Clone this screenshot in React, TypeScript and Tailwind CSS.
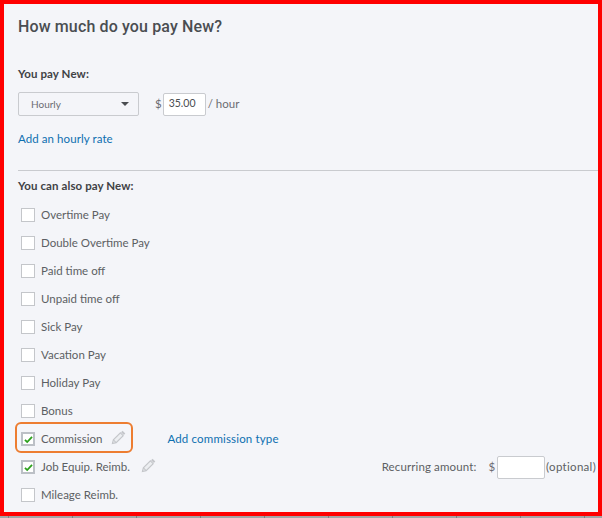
const pays = [
  { label: "Overtime Pay" },
  { label: "Double Overtime Pay" },
  { label: "Paid time off" },
  { label: "Unpaid time off" },
  { label: "Sick Pay" },
  { label: "Vacation Pay" },
  { label: "Holiday Pay" },
  { label: "Bonus" },
];

const ticks = Array.from({ length: 10 }, (_, i) => i);

function Pencil({ className }: { className?: string }) {
  return (
    <svg viewBox="0 0 16 16" className={className} fill="none" stroke="#c4c6ca" strokeWidth="1.2">
      <path d="M1.5 14.5l1-4L10 3l3 3-7.500 7.500-4 1z" fill="#eceef1" />
      <path d="M2.500 10.500l3 3" />
      <path d="M11.500 1.500l3 3" strokeWidth="2.200" />
    </svg>
  );
}

function CheckBox({ checked }: { checked?: boolean }) {
  if (checked) {
    return (
      <div className="w-[14px] h-[14px] shrink-0 bg-white border-2 border-[#bcc0c6] flex items-center justify-center">
        <svg viewBox="0 0 14 14" className="w-[9px] h-[9px]" fill="none" stroke="#2ca01c" strokeWidth="2.800">
          <path d="M1.500 7.500l3.500 3.500L12.500 3" />
        </svg>
      </div>
    );
  }
  return <div className="w-[14px] h-[14px] shrink-0 bg-white border border-[#c4c6ca]" />;
}

function Row({ label, checked }: { label: string; checked?: boolean }) {
  return (
    <div className="h-[28px] flex items-center gap-[6px] pl-[3px]">
      <CheckBox checked={checked} />
      <span className="text-[11.5px] text-[#5c5f63]">{label}</span>
    </div>
  );
}

export default function App() {
  return (
    <div
      className="w-[602px] h-[518px] bg-[#a3a4a6] overflow-hidden"
      style={{ fontFamily: 'Lato, "Liberation Sans", sans-serif' }}
    >
      <div className="w-[602px] h-[516px] border-4 border-[#ff0000] bg-[#f4f5f9] overflow-hidden pl-[14px]">
        <h1
          className="text-[16px] leading-[20px] mt-[13px] text-[#4a4d51] font-medium tracking-[0.13px]"
          style={{ fontFamily: 'Roboto, "Liberation Sans", sans-serif' }}
        >
          How much do you pay New?
        </h1>

        <div className="mt-[29px] text-[11.5px] leading-[16px] font-bold text-[#3f4245] tracking-[0.1px]">You pay New:</div>

        <div className="mt-[10px] flex items-center">
          <div className="w-[121px] h-[24px] border border-[#c9cbcf] rounded-[2px] flex items-center justify-between pl-[12px] pr-[9px]">
            <span className="text-[10px] text-[#6b6c72]">Hourly</span>
            <div className="w-0 h-0 border-x-[4px] border-x-transparent border-t-[4px] border-t-[#4a4d51]" />
          </div>
          <span className="ml-[16px] text-[11.5px] text-[#6b6c72]">$</span>
          <div className="ml-[1px] w-[43px] h-[23px] bg-white border border-[#c9cbcf] rounded-[2px] flex items-center pl-[5px] text-[10.5px] text-[#4a4d51]">
            35.00
          </div>
          <span className="ml-[2px] text-[11.5px] text-[#6b6c72]">/ hour</span>
        </div>

        <div className="mt-[15px] text-[11.5px] leading-[16px] text-[#0d6fb0] tracking-[0.08px]">Add an hourly rate</div>

        <div className="mt-[23px] h-px bg-[#c9cbcf]" />

        <div className="mt-[7px] text-[11.5px] leading-[16px] font-bold text-[#3f4245] tracking-[0.1px]">You can also pay New:</div>

        <div className="mt-[7px]">
          {pays.map((p) => (
            <Row key={p.label} label={p.label} />
          ))}

          <div className="relative flex items-center">
            <Row label="Commission" checked />
            <Pencil className="ml-[9px] w-[15px] h-[15px] -mt-[4px]" />
            <span className="ml-[41px] text-[11.5px] text-[#0d6fb0] tracking-[0.16px]">Add commission type</span>
            <div className="absolute left-[-3px] top-[-3px] w-[118px] h-[31px] border-2 border-[#ed7d31] rounded-[6px]" />
          </div>

          <div className="flex items-center">
            <Row label="Job Equip. Reimb." checked />
            <Pencil className="ml-[11px] w-[15px] h-[15px] -mt-[4px]" />
            <div className="ml-auto flex items-center pr-[2px]">
              <span className="text-[11.5px] text-[#5c5f63] tracking-[0.12px]">Recurring amount:</span>
              <span className="ml-[12px] text-[11.5px] text-[#6b6c72]">$</span>
              <div className="ml-[2px] w-[48px] h-[23px] bg-white border border-[#c9cbcf] rounded-[2px]" />
              <span className="ml-[1px] text-[11.5px] text-[#5c5f63] tracking-[0.3px]">(optional)</span>
            </div>
          </div>

          <Row label="Mileage Reimb." />
        </div>
      </div>
      <div className="h-[2px] flex pl-[8px]">
        {ticks.map((t) => (
          <div key={t} className="w-[64px] shrink-0 border-l border-[#7d7e80]" />
        ))}
      </div>
    </div>
  );
}
